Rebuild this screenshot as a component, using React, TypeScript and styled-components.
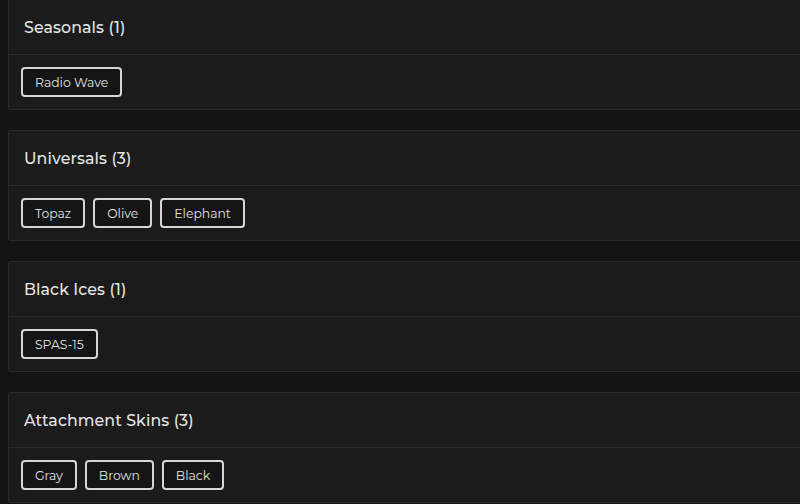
import * as React from 'react';
import styled, { createGlobalStyle } from 'styled-components';

const GlobalStyle = createGlobalStyle`
    html, body {
        margin: 0;
        padding: 0;
        background: #131313;
        font-family: Montserrat, "Noto Sans", Inter, sans-serif;
    }
`;

const Page = styled.div`
    display: flex;
    flex-direction: column;
    gap: 20px;
    margin-top: -1px;
    padding: 0 0 0 8px;
    width: 820px;
`;

const Card = styled.section`
    background: #1b1b1b;
    border: 1px solid #2a2a2a;
    border-radius: 2px;
`;

const CardHeader = styled.header`
    height: 54px;
    display: flex;
    align-items: center;
    padding: 0 15px;
    border-bottom: 1px solid #2b2b2b;
`;

const CardTitle = styled.h2`
    margin: 0;
    font-size: 15.8px;
    font-weight: 500;
    color: #e4e4e4;
    letter-spacing: 0.1px;
`;

const ChipRow = styled.div`
    display: flex;
    gap: 8px;
    padding: 12px 12px 12px;
`;

const Chip = styled.span`
    display: inline-flex;
    align-items: center;
    height: 26px;
    padding: 0 12px;
    border: 2px solid #d6d6d6;
    border-radius: 4px;
    color: #e2e2e2;
    font-size: 12.4px;
    background: #151515;
`;

const groups = [
    { title: 'Seasonals', items: ['Radio Wave'] },
    { title: 'Universals', items: ['Topaz', 'Olive', 'Elephant'] },
    { title: 'Black Ices', items: ['SPAS-15'] },
    { title: 'Attachment Skins', items: ['Gray', 'Brown', 'Black'] },
];

export default function App() {
    return (
        <>
            <GlobalStyle />
            <Page>
                {groups.map((g) => (
                    <Card key={g.title}>
                        <CardHeader>
                            <CardTitle>
                                {g.title} ({g.items.length})
                            </CardTitle>
                        </CardHeader>
                        <ChipRow>
                            {g.items.map((i) => (
                                <Chip key={i}>{i}</Chip>
                            ))}
                        </ChipRow>
                    </Card>
                ))}
            </Page>
        </>
    );
}
